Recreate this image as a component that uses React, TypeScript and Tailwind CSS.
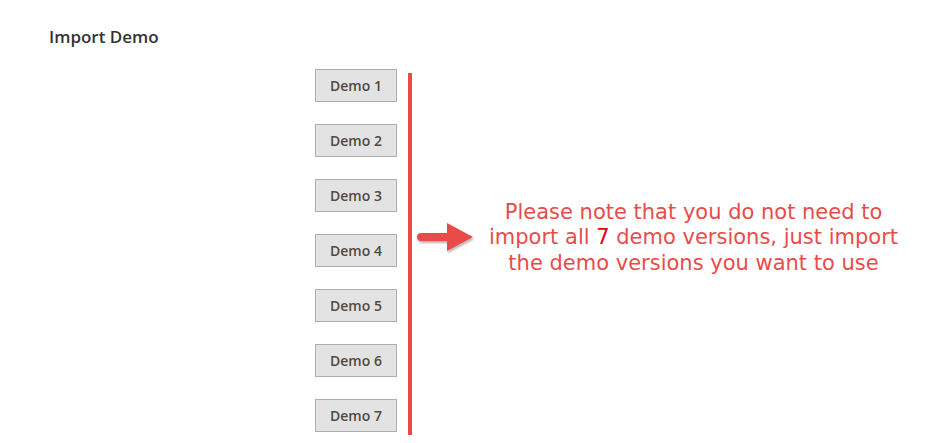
const demos = [1, 2, 3, 4, 5, 6, 7];

const Arrow = () => (
  <svg width="62" height="36" viewBox="0 0 62 36" className="block">
    <defs>
      <filter id="sh" x="-20%" y="-20%" width="140%" height="160%">
        <feDropShadow dx="1" dy="2" stdDeviation="1.2" floodColor="#000" floodOpacity="0.3" />
      </filter>
    </defs>
    <g filter="url(#sh)">
      <path d="M6 13 H32 V3 L58 17 L32 31 V21 H6 A4 4 0 0 1 6 13 Z" fill="#e84c4a" />
    </g>
  </svg>
);

export default function App() {
  return (
    <div className="bg-white w-[931px] h-[443px] overflow-hidden font-['Open_Sans',sans-serif]">
      <div className="pl-[49px] pt-[25px]">
        <h2 className="text-[17px] font-semibold text-[#333] leading-[23px]">Import Demo</h2>
      </div>
      <div className="flex pl-[315px] pt-[21px]">
        <div className="flex flex-col gap-[22px]">
          {demos.map((n) => (
            <button
              key={n}
              className="w-[82px] h-[33px] bg-[#e3e3e3] border border-[#adadad] text-[14px] font-semibold text-[#514943] leading-none"
            >
              Demo {n}
            </button>
          ))}
        </div>
        <div className="ml-[11px] mt-[4px] w-[4px] h-[362px] bg-[#e84c4a]" />
        <div className="flex items-center ml-[3px] mt-[4px] h-[330px]">
          <Arrow />
          <p className="ml-[12px] text-center text-[21px] leading-[25.5px] text-[#e84c4a] font-['DejaVu_Sans',sans-serif]">
            Please note that you do not need to
            <br />
            import all <span className="text-[#e8000b]">7</span> demo versions, just import
            <br />
            the demo versions you want to use
          </p>
        </div>
      </div>
    </div>
  );
}
